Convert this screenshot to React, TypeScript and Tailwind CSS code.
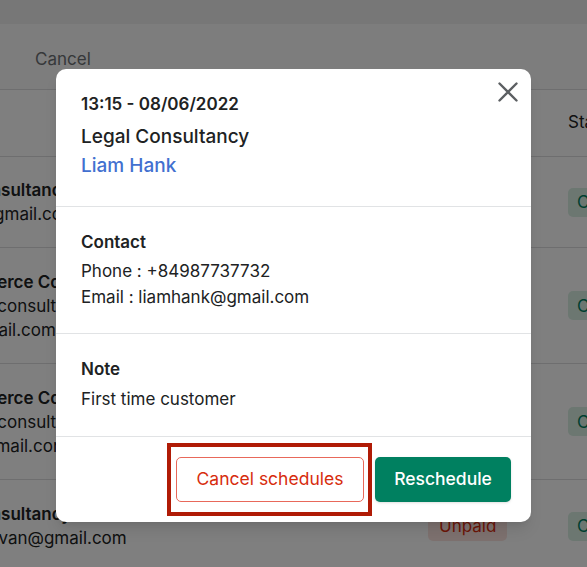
type Line = { text: string; cls: string };

const rows: { h: string; name: string; nameCls: string; lines: Line[]; pay: string }[] = [
  {
    h: "h-[91px]",
    name: "Legal Consultancy",
    nameCls: "",
    lines: [{ text: "liamhank@gmail.com", cls: "-ml-[13px]" }],
    pay: "Paid",
  },
  {
    h: "h-[116px]",
    name: "Ecommerce Consultancy",
    nameCls: "ml-[17px]",
    lines: [
      { text: "ecommerceconsultancy", cls: "-ml-[17px]" },
      { text: "ecom@gmail.com", cls: "-ml-[7px]" },
    ],
    pay: "Paid",
  },
  {
    h: "h-[116px]",
    name: "Ecommerce Consultancy",
    nameCls: "ml-[17px]",
    lines: [
      { text: "ecommerceconsultancy", cls: "-ml-[17px]" },
      { text: "ecomm@gmail.com", cls: "-ml-[10px]" },
    ],
    pay: "Paid",
  },
  {
    h: "h-[93px]",
    name: "Legal Consultancy",
    nameCls: "",
    lines: [{ text: "nguyenthivan@gmail.com", cls: "" }],
    pay: "Unpaid",
  },
];

const Background = () => {
  return (
    <div className="w-full h-full bg-white text-[17px]">
      <div className="h-[24px] bg-[#efefef]" />
      <div className="h-[66px] bg-[#fafafa] border-b border-[#dcdddf] flex items-center pt-[6px] pl-[35px] text-[#6d7175]">
        Cancel
      </div>
      <div className="h-[67px] border-b border-[#dcdddf] grid grid-cols-[509px_140px_200px] -ml-[81px] items-center text-[#202223]">
        <div>Customer</div>
        <div>Payment</div>
        <div>Status</div>
      </div>
      {rows.map((r, i) => (
        <div key={i} className={`${r.h} border-b border-[#dcdddf] grid grid-cols-[509px_140px_200px] -ml-[81px] items-center leading-6 text-[#202223]`}>
          <div className="whitespace-nowrap">
            <p className={`font-semibold ${r.nameCls}`}>{r.name}</p>
            {r.lines.map((l) => (
              <p key={l.text} className={l.cls}>{l.text}</p>
            ))}
          </div>
          <div>
            <span className={`inline-flex h-[29px] items-center px-[11px] rounded-[5px] ${r.pay === "Unpaid" ? "bg-[#fbe3df] text-[#d72c0d]" : "bg-[#e4e5e7] text-[#202223]"}`}>{r.pay}</span>
          </div>
          <div>
            <span className="inline-flex h-[29px] items-center px-[9px] rounded-[5px] bg-[#d8efe3] text-[#008060]">Completed</span>
          </div>
        </div>
      ))}
    </div>
  );
};

export default function App() {
  return (
    <div className="relative w-[587px] h-[567px] overflow-hidden font-['Inter','Liberation_Sans',sans-serif]">
      <Background />
      <div className="absolute inset-0 bg-black/50 flex justify-center items-start pt-[69px]">
        <div className="relative w-[475px] rounded-[10px] bg-white text-[#202223] shadow-lg">
          <button className="absolute right-[13px] top-[13px] w-[20px] h-[20px] text-[#5c5f62]">
            <svg viewBox="0 0 20 20" width="20" height="20" fill="none" stroke="currentColor" strokeWidth="2.4" strokeLinecap="round">
              <path d="M1.5 1.5 L18.5 18.5 M18.5 1.5 L1.5 18.5" />
            </svg>
          </button>

          <div className="px-[25px] pt-[23px] pb-[27px] border-b border-[#e1e3e5]">
            <p className="text-[17px] leading-6 font-semibold">13:15 - 08/06/2022</p>
            <p className="mt-[8px] text-[19px] leading-[26px] font-medium">Legal Consultancy</p>
            <p className="mt-[3px] text-[19px] leading-[26px] font-medium text-[#4270d0]">Liam Hank</p>
          </div>

          <div className="px-[25px] pt-[23px] pb-[24px] border-b border-[#e1e3e5] text-[17px] leading-6">
            <p className="font-semibold">Contact</p>
            <p className="mt-[5px]">Phone : +84987737732</p>
            <p className="mt-[2px]">Email : liamhank@gmail.com</p>
          </div>

          <div className="px-[25px] pt-[23px] pb-[25px] border-b border-[#e1e3e5] text-[17px] leading-6">
            <p className="font-semibold">Note</p>
            <p className="mt-[6px]">First time customer</p>
          </div>

          <div className="flex justify-end gap-[11px] px-[20px] py-[20px]">
            <div className="relative">
              <button className="w-[188px] h-[45px] rounded-[5px] border border-[#e8685a] bg-white text-[17.5px] text-[#d72c0d]">
                Cancel schedules
              </button>
              <div className="absolute -left-[9px] -right-[8px] -top-[14px] -bottom-[14px] border-4 border-[#b01b06] pointer-events-none" />
            </div>
            <button className="w-[136px] h-[45px] rounded-[5px] bg-[#008060] text-[17.5px] font-medium text-white shadow-sm">
              Reschedule
            </button>
          </div>
        </div>
      </div>
    </div>
  );
}
